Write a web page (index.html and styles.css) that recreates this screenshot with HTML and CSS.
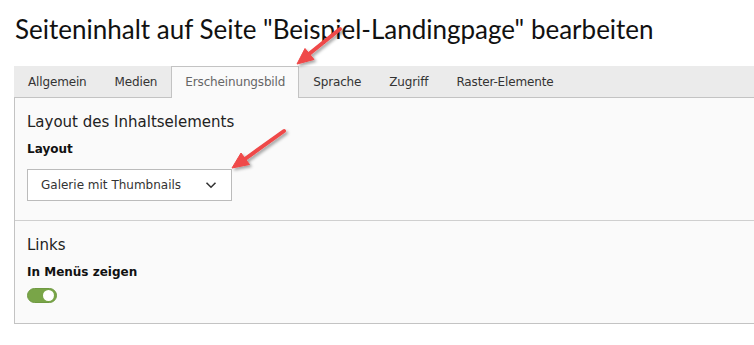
FILE: index.html
```html
<!DOCTYPE html>
<html lang="de">
<head>
    <meta charset="UTF-8">
    <meta name="viewport" content="width=device-width, initial-scale=1.0">
    <title>Seiteninhalt bearbeiten</title>
    <link rel="stylesheet" href="styles.css">
</head>
<body>
    <div class="page">
        <h1 class="page-title">Seiteninhalt auf Seite "Beispiel-Landingpage" bearbeiten</h1>

        <div class="tabs">
            <ul class="tab-nav">
                <li class="tab">Allgemein</li>
                <li class="tab">Medien</li>
                <li class="tab active">Erscheinungsbild</li>
                <li class="tab">Sprache</li>
                <li class="tab">Zugriff</li>
                <li class="tab">Raster-Elemente</li>
            </ul>

            <div class="tab-panel">
                <section class="form-section">
                    <h2 class="section-title">Layout des Inhaltselements</h2>
                    <label class="field-label">Layout</label>
                    <div class="select">
                        <span class="select-value">Galerie mit Thumbnails</span>
                        <svg class="select-chevron" width="12" height="8" viewBox="0 0 12 8">
                            <path d="M1.5 1.8 L6 6.2 L10.5 1.8" fill="none" stroke="#333" stroke-width="1.6"/>
                        </svg>
                    </div>
                </section>

                <section class="form-section">
                    <h2 class="section-title">Links</h2>
                    <label class="field-label toggle-label">In Menüs zeigen</label>
                    <span class="toggle on"><span class="toggle-knob"></span></span>
                </section>
            </div>
        </div>
    </div>

    <!-- annotation arrows drawn over the screenshot -->
    <svg class="annotations" width="754" height="345" viewBox="0 0 754 345">
        <defs>
            <filter id="shadow" x="-20%" y="-20%" width="140%" height="140%">
                <feDropShadow dx="2" dy="2" stdDeviation="1.4" flood-color="#000" flood-opacity="0.35"/>
            </filter>
        </defs>
        <g fill="#ef4848" stroke="#ef4848" filter="url(#shadow)">
            <line x1="340" y1="29" x2="309" y2="54" stroke-width="4" stroke-linecap="round"/>
            <polygon points="297,64 314,59.5 305,48.5" stroke-width="1" stroke-linejoin="round"/>
            <line x1="284" y1="131" x2="245" y2="159" stroke-width="4" stroke-linecap="round"/>
            <polygon points="232,168 249.5,164.5 241,153" stroke-width="1" stroke-linejoin="round"/>
        </g>
    </svg>
</body>
</html>
```

FILE: styles.css
```css
* {
    margin: 0;
    padding: 0;
    box-sizing: border-box;
}

body {
    font-family: 'DejaVu Sans', Verdana, sans-serif;
    font-size: 12px;
    color: #333;
    background: #fff;
    overflow: hidden;
}

.page {
    padding-left: 14px;
    margin-right: -20px;
}

.page-title {
    font-family: Lato, 'Open Sans', sans-serif;
    font-weight: normal;
    font-size: 26px;
    line-height: 32px;
    color: #111;
    padding: 13px 0 0 1px;
    margin-bottom: 21px;
}

.tab-nav {
    list-style: none;
    display: flex;
    height: 32px;
    background: #ebebeb;
    border-bottom: 1px solid #c3c3c3;
}

.tab {
    height: 32px;
    line-height: 30px;
    padding: 0 13px;
    letter-spacing: -0.15px;
    border: 1px solid transparent;
    border-bottom: none;
    color: #333;
}

.tab.active {
    background: #fafafa;
    border-color: #c3c3c3;
    color: #666;
}

.tab-panel {
    background: #fafafa;
    border: 1px solid #c3c3c3;
    border-top: none;
}

.form-section {
    padding: 15px 12px 19px;
}

.form-section + .form-section {
    border-top: 1px solid #cfcfcf;
    padding-bottom: 20px;
}

.section-title {
    font-size: 15px;
    font-weight: normal;
    line-height: 18px;
    color: #222;
    margin-bottom: 10px;
}

.field-label {
    display: block;
    font-weight: bold;
    line-height: 16px;
    color: #111;
    margin-bottom: 12px;
}

.toggle-label {
    margin-bottom: 8px;
}

.select {
    display: flex;
    align-items: center;
    justify-content: space-between;
    width: 205px;
    height: 32px;
    padding: 0 14px 0 13px;
    background: #fff;
    border: 1px solid #bbb;
}

.select-chevron {
    display: block;
}

.toggle {
    display: block;
    position: relative;
    width: 30px;
    height: 15px;
    border-radius: 8px;
    background: #79a548;
    border: 1px solid #6f9a42;
}

.toggle-knob {
    position: absolute;
    top: 1px;
    right: 2px;
    width: 11px;
    height: 11px;
    border-radius: 50%;
    background: #fff;
}

.annotations {
    position: absolute;
    top: 0;
    left: 0;
    pointer-events: none;
}
```
